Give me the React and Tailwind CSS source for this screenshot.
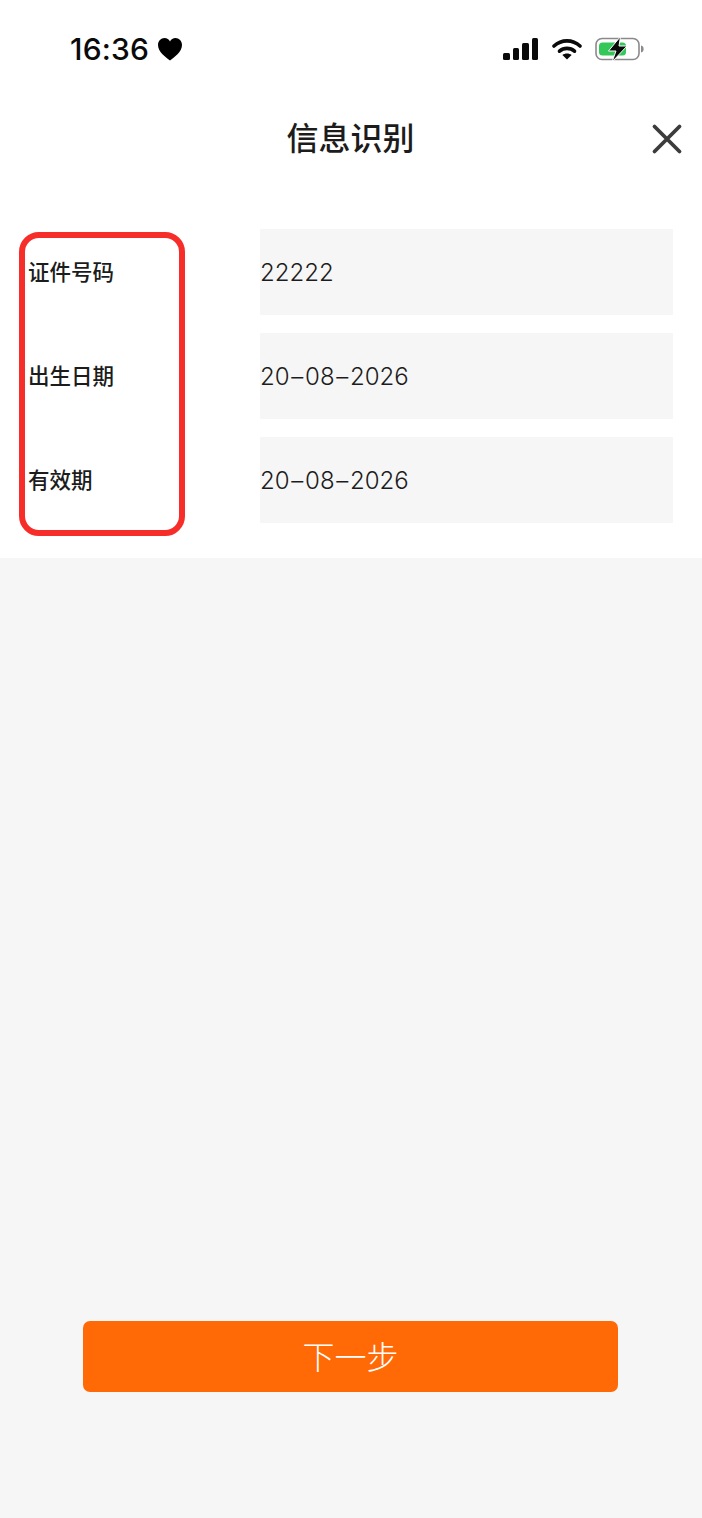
import React from 'react';

const cjk = 'font-["Inter","Noto_Sans_CJK_SC",sans-serif]';

const rows = [
    { label: '证件号码', value: ['22222'] },
    { label: '出生日期', value: ['20', '08', '2026'] },
    { label: '有效期', value: ['20', '08', '2026'] },
];

const Heart = () => (
    <svg width="26" height="24" viewBox="0 0 26 24" fill="#000">
        <path d="M13 23.5C9 20.5 1 15 1 8C1 4 4 1 7.5 1C10 1 12 2.3 13 4.5C14 2.3 16 1 18.5 1C22 1 25 4 25 8C25 15 17 20.5 13 23.5Z" />
    </svg>
);

const Signal = () => (
    <div className="flex items-end gap-[3px] h-[22px] mr-[1px]">
        <div className="w-[6.5px] h-[7px] rounded-[1.5px] bg-[#0a0a0a]" />
        <div className="w-[6.5px] h-[12px] rounded-[1.5px] bg-[#0a0a0a]" />
        <div className="w-[6.5px] h-[17px] rounded-[1.5px] bg-[#0a0a0a]" />
        <div className="w-[6.5px] h-[22px] rounded-[1.5px] bg-[#0a0a0a]" />
    </div>
);

const Wifi = () => (
    <svg width="30" height="22" viewBox="0 0 30 22" fill="none">
        <path d="M2 8C9.5 1.2 20.5 1.2 28 8" stroke="#0a0a0a" strokeWidth="3.6" strokeLinecap="round" />
        <path d="M7.5 13.2C11.8 9.4 18.2 9.4 22.5 13.2" stroke="#0a0a0a" strokeWidth="3.6" strokeLinecap="round" />
        <path d="M15 21.5L10.4 17C13 15 17 15 19.6 17Z" fill="#0a0a0a" />
    </svg>
);

const Battery = () => (
    <svg width="50" height="28" viewBox="0 0 50 28" fill="none">
        <rect x="1" y="3.5" width="43" height="21" rx="6" stroke="#8a8a8a" strokeWidth="1.6" fill="#fff" />
        <rect x="4" y="7.5" width="27" height="13" rx="3.5" fill="#34c759" />
        <path d="M46 10.5C48 11 48.6 12.3 48.6 14C48.6 15.7 48 17 46 17.5Z" fill="#8a8a8a" />
        <path d="M25.5 1.5L13.5 16H21L17 27L32 11H24L25.5 1.5Z" fill="#0a0a0a" stroke="#fff" strokeWidth="1" />
    </svg>
);

const App = () => {
    return (
        <div className={`flex flex-col w-[702px] h-[1518px] bg-[#f6f6f6] ${cjk}`}>
            <div className="h-[558px] bg-white">
                {/* status bar */}
                <div className="flex items-center justify-between h-[98px] pl-[70px] pr-[57px]">
                    <div className="flex items-center gap-[8px]">
                        <span className="text-[30px] leading-none font-medium tracking-[0.2px] text-[#0a0a0a]">16:36</span>
                        <Heart />
                    </div>
                    <div className="flex items-center gap-[13px]">
                        <Signal />
                        <Wifi />
                        <Battery />
                    </div>
                </div>

                {/* nav */}
                <div className="relative flex items-center justify-center h-[80px]">
                    <h1 className="text-[32px] leading-none font-medium text-[#1c1c1c] mt-[2px] -ml-[1px]">信息识别</h1>
                    <svg className="absolute right-[19px] top-[25px]" width="32" height="32" viewBox="0 0 32 32" fill="none">
                        <path d="M3.5 3.5L28.5 28.5M28.5 3.5L3.5 28.5" stroke="#3c3c3c" strokeWidth="3.8" strokeLinecap="round" />
                    </svg>
                </div>

                {/* form */}
                <div className="relative flex flex-col gap-[18px] mt-[51px] pl-[28px] pr-[29px]">
                    {rows.map((row) => (
                        <div key={row.label} className="flex items-center h-[86px]">
                            <div className="w-[232px] text-[21.5px] font-medium text-[#1c1c1c]">{row.label}</div>
                            <div className="flex items-center flex-1 h-full pt-[2px] bg-[#f6f6f6] text-[24px] font-light text-[#1c1c1c]">
                                {row.value.map((part, i) => (
                                    <span key={i}>
                                        {i > 0 && <span className="mx-[1.75px]">–</span>}
                                        {part}
                                    </span>
                                ))}
                            </div>
                        </div>
                    ))}
                    <div className="absolute left-[19px] top-[3px] w-[166px] h-[304px] rounded-[20px] border-[6px] border-[#f62d28]" />
                </div>
            </div>

            <div className="flex justify-center mt-[763px] pr-[1px]">
                <button className="w-[535px] h-[71px] rounded-[7px] bg-[#ff6a07] text-[32px] leading-none font-light text-white pt-[2px]">
                    下一步
                </button>
            </div>
        </div>
    );
};

export default App;
